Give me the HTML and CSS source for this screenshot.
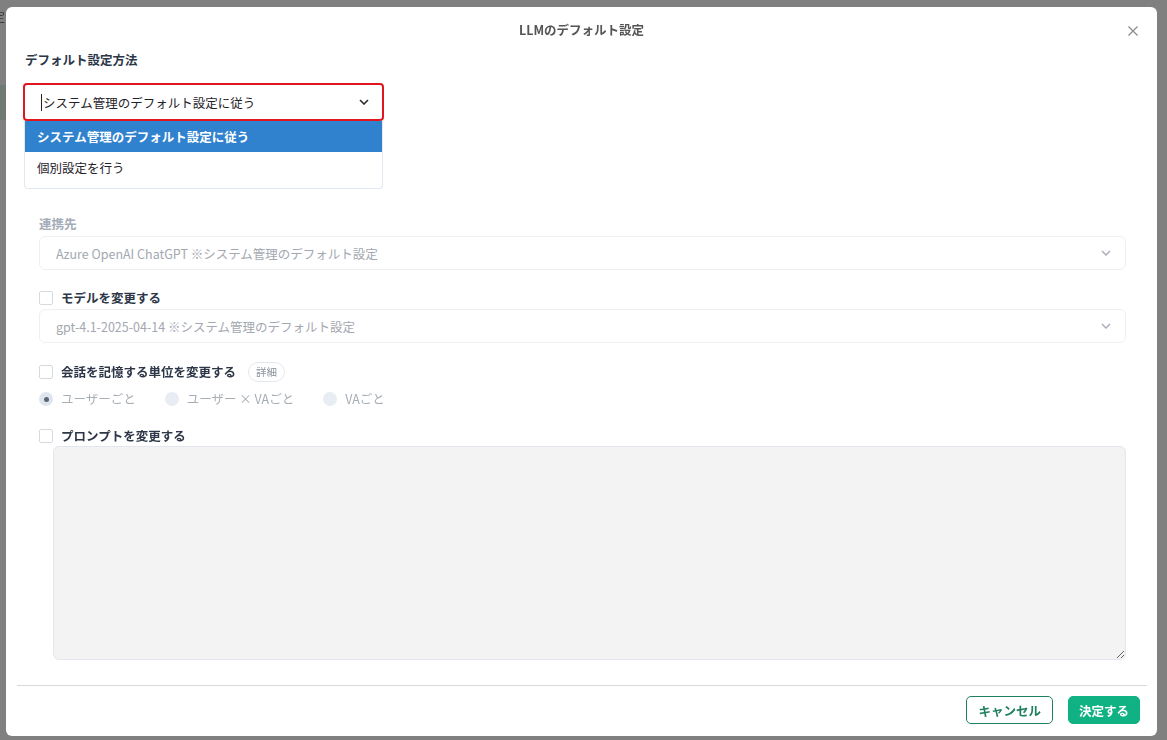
FILE: index.html
```html
<!DOCTYPE html>
<html lang="ja">
<head>
    <meta charset="UTF-8">
    <meta name="viewport" content="width=device-width, initial-scale=1.0">
    <title>LLMのデフォルト設定</title>
    <link rel="stylesheet" href="styles.css">
</head>
<body>
    <!-- Page behind the overlay -->
    <div class="page-behind">
        <span class="behind-text">定</span>
        <div class="behind-bar"></div>
    </div>

    <!-- Modal -->
    <div class="modal">
        <div class="modal-header">
            <h2 class="modal-title">LLMのデフォルト設定</h2>
            <button class="close-btn" aria-label="閉じる">
                <svg width="10" height="10" viewBox="0 0 10 10"><path d="M0.5 0.5 L9.5 9.5 M9.5 0.5 L0.5 9.5" stroke="#8a8a8a" stroke-width="1.2" fill="none"/></svg>
            </button>
        </div>

        <div class="modal-body">
            <div class="field-label">デフォルト設定方法</div>
            <div class="select-wrap">
                <div class="select focused">
                    <span class="text-caret"></span>
                    <span class="select-text">システム管理のデフォルト設定に従う</span>
                    <svg class="chevron" width="10" height="6" viewBox="0 0 10 6"><polyline points="1,1 5,5 9,1" stroke="#2d2d2d" stroke-width="1.6" fill="none"/></svg>
                </div>
                <ul class="dropdown">
                    <li class="option selected">システム管理のデフォルト設定に従う</li>
                    <li class="option">個別設定を行う</li>
                </ul>
            </div>

            <!-- Disabled settings -->
            <div class="disabled-section">
                <div class="sub-label">連携先</div>
                <div class="d-select">
                    <span>Azure OpenAI ChatGPT ※システム管理のデフォルト設定</span>
                    <svg class="chevron" width="10" height="6" viewBox="0 0 10 6"><polyline points="1,1 5,5 9,1" stroke="#a9b0b9" stroke-width="1.5" fill="none"/></svg>
                </div>

                <label class="check-row first">
                    <span class="checkbox"></span>
                    <span class="check-label">モデルを変更する</span>
                </label>
                <div class="d-select tight">
                    <span>gpt-4.1-2025-04-14 ※システム管理のデフォルト設定</span>
                    <svg class="chevron" width="10" height="6" viewBox="0 0 10 6"><polyline points="1,1 5,5 9,1" stroke="#a9b0b9" stroke-width="1.5" fill="none"/></svg>
                </div>

                <label class="check-row with-badge">
                    <span class="checkbox"></span>
                    <span class="check-label">会話を記憶する単位を変更する</span>
                    <span class="badge">詳細</span>
                </label>
                <div class="radio-row">
                    <span class="radio-item"><span class="radio checked"></span>ユーザーごと</span>
                    <span class="radio-item"><span class="radio"></span>ユーザー × VAごと</span>
                    <span class="radio-item"><span class="radio"></span>VAごと</span>
                </div>

                <label class="check-row prompt">
                    <span class="checkbox"></span>
                    <span class="check-label">プロンプトを変更する</span>
                </label>
                <textarea class="prompt-area" readonly></textarea>
            </div>
        </div>

        <div class="modal-footer">
            <button class="btn btn-cancel">キャンセル</button>
            <button class="btn btn-primary">決定する</button>
        </div>
    </div>
</body>
</html>
```

FILE: styles.css
```css
* {
    box-sizing: border-box;
}

body {
    font-family: "Noto Sans CJK JP", "Noto Sans", sans-serif;
    font-size: 12.5px;
    margin: 0;
    padding: 7px 0 0 6px;
    height: 740px;
    overflow: hidden;
    background: #808080;
    color: #2d3748;
}

/* Page behind the overlay */
.page-behind {
    position: fixed;
    top: 0;
    left: 0;
    width: 100%;
    height: 100%;
    z-index: 0;
}

.behind-text {
    position: absolute;
    left: -7px;
    top: 8px;
    font-size: 12px;
    color: #3a3a3a;
}

.behind-bar {
    position: absolute;
    left: 0;
    top: 85px;
    width: 8px;
    height: 35px;
    background: #6f7a71;
}

/* Modal */
.modal {
    position: relative;
    z-index: 1;
    width: 1151px;
    height: 729px;
    background: #fff;
    border-radius: 6px;
    display: flex;
    flex-direction: column;
}

.modal-header {
    position: relative;
    height: 38px;
    padding-top: 15px;
    text-align: center;
}

.modal-title {
    margin: 0;
    font-size: 12.5px;
    line-height: 16px;
    font-weight: bold;
    color: #555;
}

.close-btn {
    position: absolute;
    top: 19px;
    right: 19px;
    width: 10px;
    height: 10px;
    padding: 0;
    border: none;
    background: none;
    display: flex;
    cursor: pointer;
}

.modal-body {
    flex: 1;
    padding: 7px 31px 0 17px;
}

.field-label {
    padding-left: 2px;
    line-height: 16px;
    font-weight: bold;
    color: #2d3748;
}

/* Focused select with open list */
.select-wrap {
    position: relative;
    width: 361px;
    margin-top: 15px;
}

.select {
    height: 38px;
    border: 2px solid #e2161f;
    border-radius: 4px;
    display: flex;
    align-items: center;
    padding: 0 13px 0 16px;
    color: #1f2329;
}

.text-caret {
    width: 1px;
    height: 17px;
    background: #222;
    margin-right: 1px;
}

.chevron {
    margin-left: auto;
    flex-shrink: 0;
}

.dropdown {
    position: absolute;
    top: 100%;
    left: 1px;
    width: 359px;
    margin: 0;
    padding: 0 0 5px;
    list-style: none;
    background: #fff;
    border: 1px solid #e2e8f0;
    border-top: none;
    border-radius: 0 0 4px 4px;
    z-index: 5;
}

.option {
    height: 31px;
    line-height: 31px;
    padding-left: 12px;
    color: #1f2329;
}

.option.selected {
    background: #3182ce;
    color: #fff;
    font-weight: bold;
}

/* Disabled section */
.disabled-section {
    margin-top: 95px;
    padding-left: 16px;
}

.sub-label {
    line-height: 16px;
    font-weight: bold;
    color: #a3abb6;
}

.d-select {
    margin-top: 4px;
    height: 34px;
    border: 1px solid #edf0f3;
    border-radius: 6px;
    display: flex;
    align-items: center;
    padding: 0 14px 0 16px;
    color: #a3a8b0;
}

.d-select.tight {
    margin-top: 3px;
}

.check-row {
    display: flex;
    align-items: center;
    gap: 8px;
    line-height: 16px;
    margin-top: 20px;
}

.check-row.with-badge {
    margin-top: 19px;
}

.check-row.prompt {
    margin-top: 21px;
}

.checkbox {
    width: 14px;
    height: 14px;
    border: 1px solid #d5dae1;
    border-radius: 2px;
    background: #fff;
    flex-shrink: 0;
}

.check-label {
    font-weight: bold;
    color: #2d3748;
}

.badge {
    margin-left: 4px;
    height: 20px;
    line-height: 18px;
    padding: 0 7px;
    border: 1px solid #e2e8f0;
    border-radius: 10px;
    font-size: 10.5px;
    color: #8b929b;
}

.radio-row {
    display: flex;
    gap: 29px;
    margin-top: 9px;
    line-height: 16px;
    color: #a8aeb6;
}

.radio-item {
    display: flex;
    align-items: center;
    gap: 8px;
}

.radio {
    position: relative;
    width: 14px;
    height: 14px;
    border-radius: 50%;
    background: #e8edf3;
}

.radio.checked {
    background: #dfe5ee;
}

.radio.checked::after {
    content: "";
    position: absolute;
    top: 4.5px;
    left: 4.5px;
    width: 5px;
    height: 5px;
    border-radius: 50%;
    background: #5b6675;
}

.prompt-area {
    display: block;
    margin: 2px 0 0 14px;
    width: calc(100% - 14px);
    height: 214px;
    background: #f3f3f3;
    border: 1px solid #e2e6ee;
    border-radius: 6px;
    font-family: inherit;
    outline: none;
}

/* Footer */
.modal-footer {
    margin: 0 10px 0 11px;
    border-top: 1px solid #d9d9d9;
    padding: 10px 7px 12px;
    display: flex;
    justify-content: flex-end;
    gap: 15px;
}

.btn {
    height: 28px;
    font-family: inherit;
    font-size: 12.5px;
    font-weight: bold;
    border-radius: 5px;
    cursor: pointer;
}

.btn-cancel {
    padding: 0 11px;
    background: #fff;
    border: 1px solid #1d8060;
    color: #1d8060;
}

.btn-primary {
    padding: 0 10px;
    background: #10b283;
    border: 1px solid #10b283;
    color: #fff;
}
```
